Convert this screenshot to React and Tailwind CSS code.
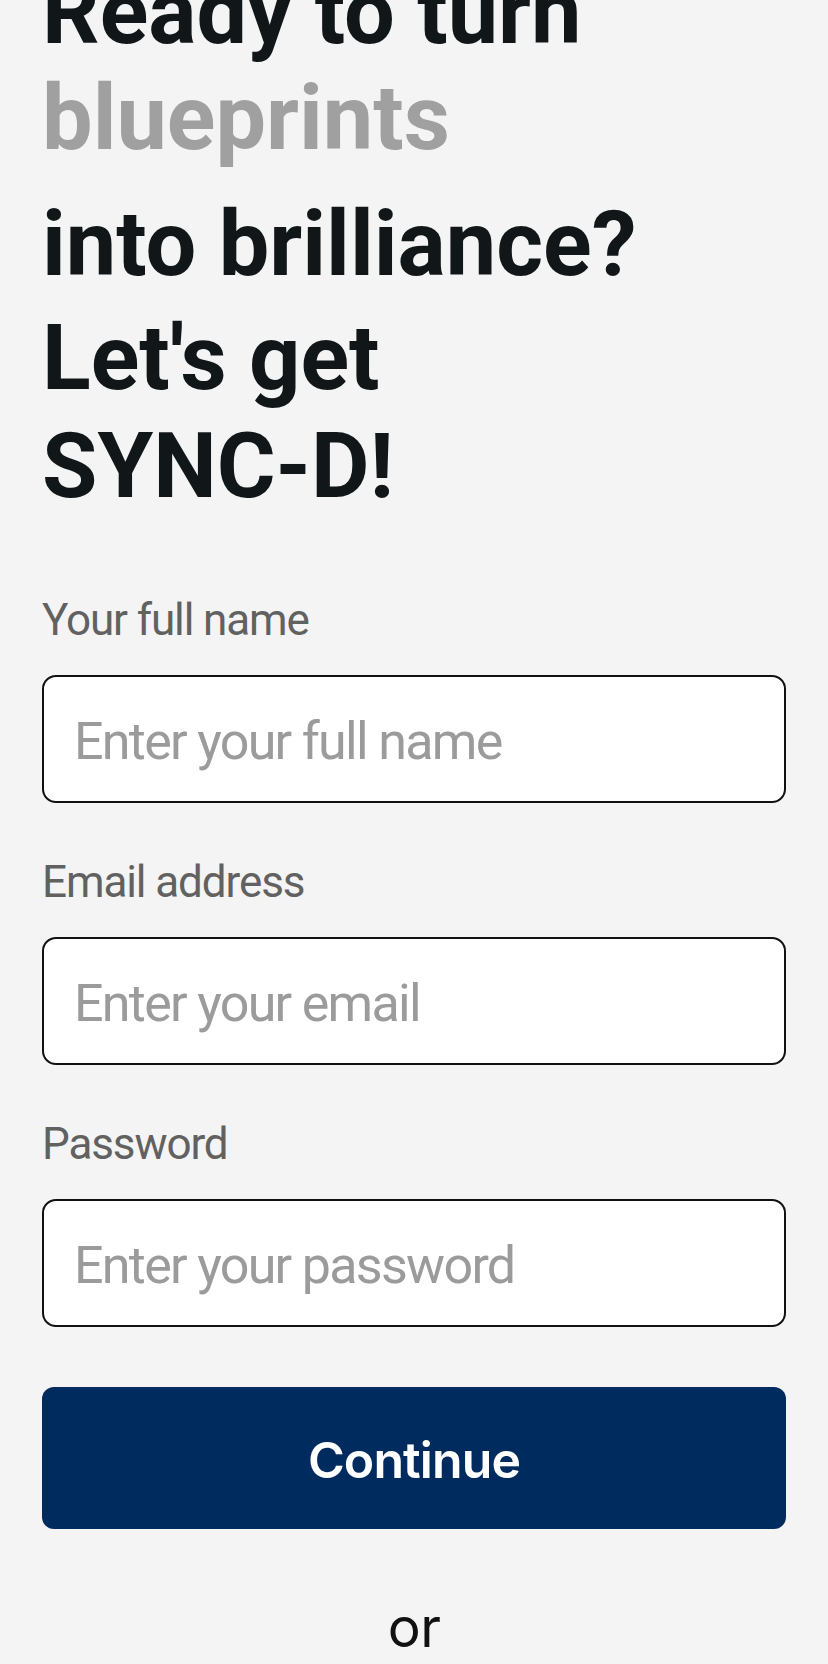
import React, { useState } from "react";

const Field = ({ label, placeholder, type = "text", value, onChange }) => {
    return (
        <div className="flex flex-col">
            <label className="text-[44px] leading-[52px] text-[#616161] tracking-[-1.1px]">{label}</label>
            <input
                type={type}
                value={value}
                onChange={onChange}
                placeholder={placeholder}
                className="mt-[29px] h-[128px] w-full rounded-[14px] border-2 border-[#111111] bg-white px-[30px] pt-1 text-[52px] text-[#111111] tracking-[-1.7px] outline-none placeholder:text-[#9b9b9b]"
            />
        </div>
    );
};

const App = () => {
    const [form, setForm] = useState({ name: "", email: "", password: "" });

    const update = (key) => (e) => setForm({ ...form, [key]: e.target.value });

    return (
        <div
            className="min-h-[1664px] w-full overflow-hidden bg-[#f4f4f4] px-[42px]"
            style={{ fontFamily: "Roboto, 'Liberation Sans', sans-serif" }}
        >
            <h1 className="mt-[-40px] text-[90px] font-bold leading-[106px] text-[#111619]">
                <span className="block">Ready to turn</span>
                <span className="block mb-[20px] text-[#a0a0a0]">blueprints</span>
                <span className="block mb-[8px]">into brilliance?</span>
                <span className="block mb-[2px]">Let's get</span>
                <span className="block">SYNC-D!</span>
            </h1>

            <form className="mt-[74px] flex flex-col gap-[53px]" onSubmit={(e) => e.preventDefault()}>
                <Field label="Your full name" placeholder="Enter your full name" value={form.name} onChange={update("name")} />
                <Field label="Email address" placeholder="Enter your email" type="email" value={form.email} onChange={update("email")} />
                <Field label="Password" placeholder="Enter your password" type="password" value={form.password} onChange={update("password")} />

                <button
                    type="submit"
                    className="mt-[7px] h-[142px] w-full rounded-[12px] bg-[#002b5e] pt-1 text-[50px] font-semibold text-white tracking-[-0.9px]"
                    style={{ fontFamily: "Inter, 'Noto Sans', sans-serif" }}
                >
                    Continue
                </button>
            </form>

            <p
                className="mt-[65px] text-center text-[55px] leading-[66px] text-[#111111] tracking-[-0.5px]"
                style={{ fontFamily: "Inter, 'Noto Sans', sans-serif" }}
            >
                or
            </p>
        </div>
    );
};

export default App;
